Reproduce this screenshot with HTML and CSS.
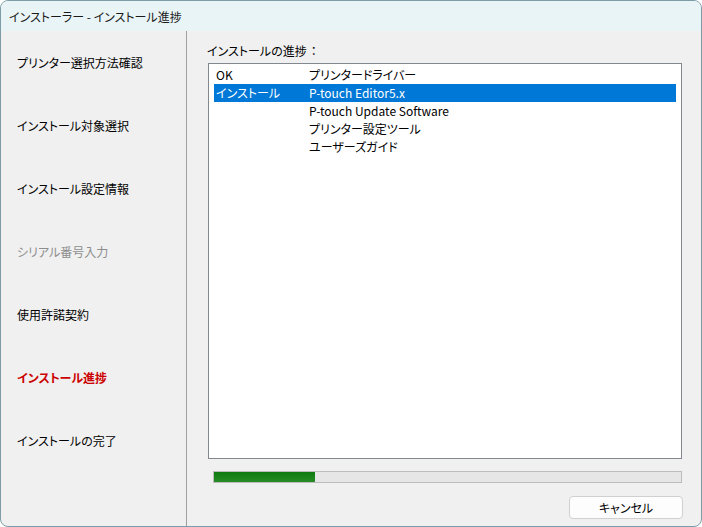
FILE: index.html
```html
<!DOCTYPE html>
<html lang="ja">
<head>
<meta charset="utf-8">
<title>インストーラー - インストール進捗</title>
<link rel="stylesheet" href="styles.css">
</head>
<body>
<div class="window">
  <div class="titlebar">インストーラー - インストール進捗</div>
  <div class="main">
    <nav class="steps">
      <div class="step">プリンター選択方法確認</div>
      <div class="step">インストール対象選択</div>
      <div class="step">インストール設定情報</div>
      <div class="step disabled">シリアル番号入力</div>
      <div class="step">使用許諾契約</div>
      <div class="step current">インストール進捗</div>
      <div class="step">インストールの完了</div>
    </nav>
    <section class="content">
      <div class="label">インストールの進捗<span class="colon">：</span></div>
      <div class="listbox">
        <div class="row"><span class="c1">OK</span><span class="c2">プリンタードライバー</span></div>
        <div class="row selected"><span class="c1">インストール</span><span class="c2">P-touch Editor5.x</span></div>
        <div class="row"><span class="c1"></span><span class="c2">P-touch Update Software</span></div>
        <div class="row"><span class="c1"></span><span class="c2">プリンター設定ツール</span></div>
        <div class="row"><span class="c1"></span><span class="c2">ユーザーズガイド</span></div>
      </div>
      <div class="progress"><div class="fill" style="width:21.6%"></div></div>
      <div class="actions"><button class="btn">キャンセル</button></div>
    </section>
  </div>
</div>
</body>
</html>
```
FILE: styles.css
```css
* { box-sizing: border-box; }
html, body { margin: 0; padding: 0; }
body {
  width: 702px;
  height: 527px;
  background: #ffffff;
  font-family: "Noto Sans CJK JP", "Noto Sans", sans-serif;
  font-size: 12px;
  font-feature-settings: "palt";
  color: #000;
  overflow: hidden;
}
.window {
  width: 702px;
  height: 527px;
  border: 1px solid #7e9ca6;
  border-radius: 8px;
  background: #f0f0f0;
  overflow: hidden;
  display: flex;
  flex-direction: column;
}
.titlebar {
  height: 30px;
  flex: none;
  background: #e9f4f6;
  padding-left: 8px;
  display: flex;
  align-items: center;
  font-size: 12px;
  color: #1a1a1a;
}
.main {
  flex: 1;
  display: flex;
}
.steps {
  width: 186px;
  flex: none;
  border-right: 1px solid #a0a0a0;
  padding-top: 22px;
  display: flex;
  flex-direction: column;
}
.step {
  height: 63px;
  padding-left: 16px;
  line-height: 20px;
  font-size: 12px;
  color: #000;
}
.step.disabled { color: #8d8d8d; }
.step.current { color: #cc0000; font-weight: bold; }
.content {
  flex: 1;
  padding: 10px 19px 0 20px;
  display: flex;
  flex-direction: column;
}
.label {
  height: 22px;
  line-height: 20px;
  font-size: 12px;
}
.colon { font-feature-settings: normal; padding-left: 1px; }
.listbox {
  height: 396px;
  margin-left: 1px;
  background: #fff;
  border: 1px solid #828790;
  padding: 2px 5px 0 5px;
}
.row {
  height: 18px;
  line-height: 18px;
  display: flex;
  font-size: 12px;
}
.row.selected { background: #0078d7; color: #fff; }
.c1 { width: 95px; padding-left: 2px; flex: none; }
.c2 { flex: 1; }
.progress {
  margin: 12px 0 0 6px;
  height: 12px;
  background: #e6e6e6;
  border: 1px solid #bcbcbc;
}
.fill {
  height: 100%;
  background: linear-gradient(#0f7a10, #1c861c 60%, #2a8c2a);
}
.actions {
  display: flex;
  justify-content: flex-end;
  margin-top: 13px;
}
.btn {
  width: 114px;
  height: 23px;
  margin-right: -1px;
  background: #fdfdfd;
  border: 1px solid #d0d0d0;
  border-radius: 4px;
  font-family: inherit;
  font-size: 12px;
  font-feature-settings: "palt";
  color: #000;
  padding: 0;
}
```
